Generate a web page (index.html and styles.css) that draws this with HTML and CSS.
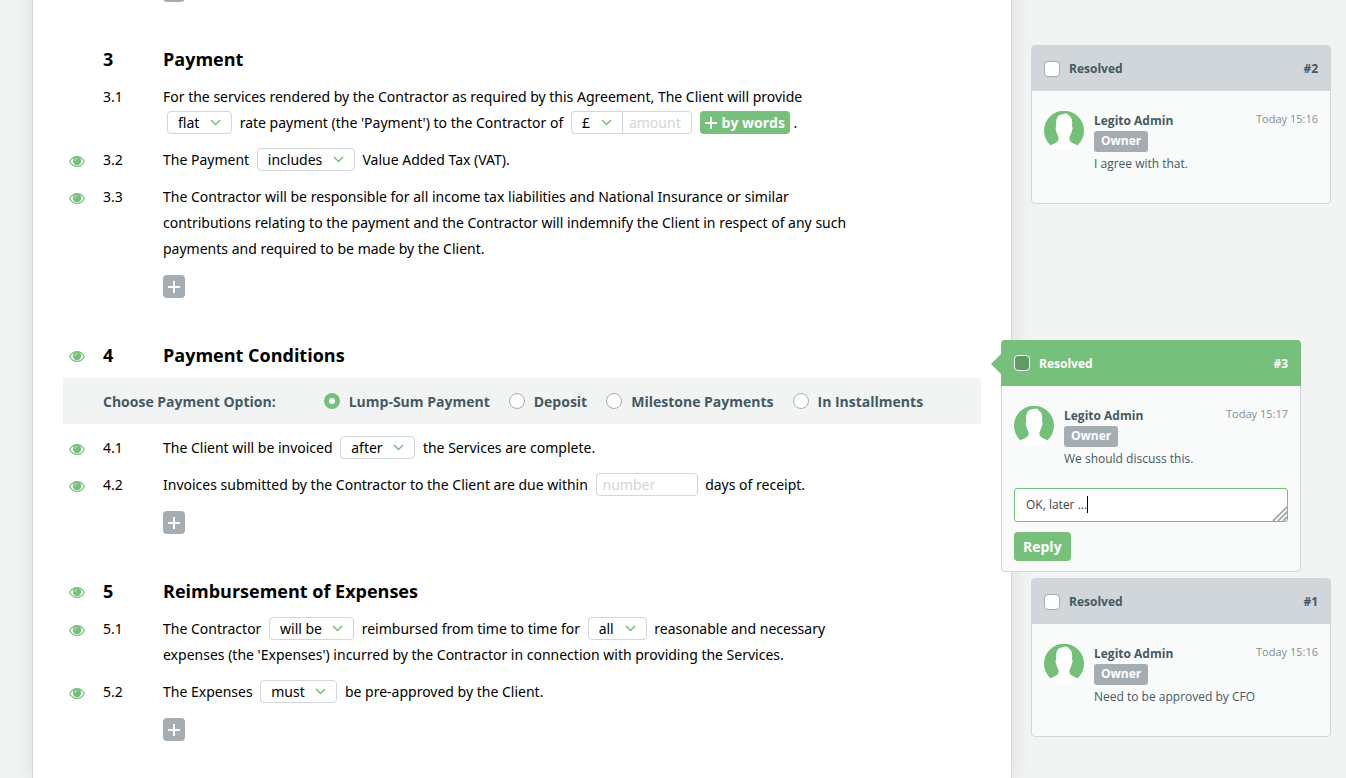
FILE: index.html
```html
<!DOCTYPE html>
<html lang="en">
<head>
    <meta charset="UTF-8">
    <meta name="viewport" content="width=device-width, initial-scale=1.0">
    <title>Service Agreement</title>
    <link rel="stylesheet" href="styles.css">
</head>
<body>
    <!-- shared icons -->
    <svg class="sprite" aria-hidden="true">
        <symbol id="eye" viewBox="0 0 16 11">
            <path d="M0.6 5.500C2.500 2.200 5 0.600 8 0.600S13.500 2.200 15.400 5.500C13.500 8.800 11 10.400 8 10.400S2.500 8.800 0.600 5.500Z" fill="none" stroke="currentColor" stroke-width="1.200"/>
            <circle cx="8" cy="5" r="4.200" fill="currentColor"/>
            <path d="M5.900 4.600C5.900 3.500 6.700 2.800 7.800 2.700" fill="none" stroke="#fff" stroke-width="0.700" stroke-linecap="round"/>
        </symbol>
        <symbol id="plus" viewBox="0 0 12 12">
            <path d="M6 0V12M0 6H12" fill="none" stroke="currentColor" stroke-width="2"/>
        </symbol>
        <symbol id="avatar" viewBox="0 0 40 40">
            <circle cx="20" cy="20" r="20" fill="#fff"/>
            <path d="M6.500 34.500A20 20 0 1 1 33.500 34.500C31 32.500 27 32 25.800 29.500C25 27.500 25.500 25.500 26.500 24C27.300 22.500 27.500 21 28 19.500C28.800 18 28.800 16.500 28 15.500C28.300 11 28.500 7 25.500 5C24.500 4 23.500 2.500 22 2.500C19 3.500 15.500 3 13.500 6C12 8.500 12 12 12.200 15.500C11.300 16.500 11.500 18 12 19.500C12.500 21 12.800 22.500 13.500 24C14.500 25.500 15 27.500 14.200 29.500C13 32 9 32.500 6.500 34.500Z" fill="#74c079"/>
        </symbol>
    </svg>

    <div class="page">
        <main class="paper">
            <div class="add-row">
                <button type="button" class="add" aria-label="Add clause"><svg><use href="#plus"/></svg></button>
            </div>

            <section class="section">
                <div class="row heading">
                    <span></span>
                    <span>3</span>
                    <h2>Payment</h2>
                </div>
                <div class="row">
                    <span></span>
                    <span>3.1</span>
                    <p>For the services rendered by the Contractor as required by this Agreement, The Client will provide
                        <select class="pick" aria-label="Rate"><option>flat</option></select>
                        rate payment (the 'Payment') to the Contractor of
                        <span class="money"><select class="pick" aria-label="Currency"><option>£</option></select><input type="text" class="field" placeholder="amount" aria-label="Amount"></span>
                        <button type="button" class="words"><svg><use href="#plus"/></svg>by words</button> .</p>
                </div>
                <div class="row">
                    <svg class="eye"><use href="#eye"/></svg>
                    <span>3.2</span>
                    <p>The Payment
                        <select class="pick" aria-label="VAT"><option>includes</option></select>
                        Value Added Tax (VAT).</p>
                </div>
                <div class="row">
                    <svg class="eye"><use href="#eye"/></svg>
                    <span>3.3</span>
                    <p>The Contractor will be responsible for all income tax liabilities and National Insurance or similar contributions relating to the payment and the Contractor will indemnify the Client in respect of any such payments and required to be made by the Client.</p>
                </div>
                <div class="add-row">
                    <button type="button" class="add" aria-label="Add clause"><svg><use href="#plus"/></svg></button>
                </div>
            </section>

            <section class="section">
                <div class="row heading">
                    <svg class="eye"><use href="#eye"/></svg>
                    <span>4</span>
                    <h2>Payment Conditions</h2>
                </div>
                <div class="options" role="radiogroup" aria-labelledby="optionTitle">
                    <span class="options-title" id="optionTitle">Choose Payment Option:</span>
                    <label><input type="radio" name="payment" value="lump" checked>Lump-Sum Payment</label>
                    <label><input type="radio" name="payment" value="deposit">Deposit</label>
                    <label><input type="radio" name="payment" value="milestone">Milestone Payments</label>
                    <label><input type="radio" name="payment" value="installments">In Installments</label>
                </div>
                <div class="row">
                    <svg class="eye"><use href="#eye"/></svg>
                    <span>4.1</span>
                    <p>The Client will be invoiced
                        <select class="pick" aria-label="Invoice time"><option>after</option></select>
                        the Services are complete.</p>
                </div>
                <div class="row">
                    <svg class="eye"><use href="#eye"/></svg>
                    <span>4.2</span>
                    <p>Invoices submitted by the Contractor to the Client are due within
                        <input type="text" class="field days" placeholder="number" aria-label="Number of days">
                        days of receipt.</p>
                </div>
                <div class="add-row">
                    <button type="button" class="add" aria-label="Add clause"><svg><use href="#plus"/></svg></button>
                </div>
            </section>

            <section class="section">
                <div class="row heading">
                    <svg class="eye"><use href="#eye"/></svg>
                    <span>5</span>
                    <h2>Reimbursement of Expenses</h2>
                </div>
                <div class="row">
                    <svg class="eye"><use href="#eye"/></svg>
                    <span>5.1</span>
                    <p>The Contractor
                        <select class="pick" aria-label="Reimbursed"><option>will be</option></select>
                        reimbursed from time to time for
                        <select class="pick" aria-label="Scope"><option>all</option></select>
                        reasonable and necessary expenses (the 'Expenses') incurred by the Contractor in connection with providing the Services.</p>
                </div>
                <div class="row">
                    <svg class="eye"><use href="#eye"/></svg>
                    <span>5.2</span>
                    <p>The Expenses
                        <select class="pick" aria-label="Approval"><option>must</option></select>
                        be pre-approved by the Client.</p>
                </div>
                <div class="add-row">
                    <button type="button" class="add" aria-label="Add clause"><svg><use href="#plus"/></svg></button>
                </div>
            </section>
        </main>

        <aside class="comments">
            <article class="comment">
                <header>
                    <label><input type="checkbox">Resolved</label>
                    <span>#2</span>
                </header>
                <div class="comment-body">
                    <svg class="avatar"><use href="#avatar"/></svg>
                    <div class="message">
                        <strong>Legito Admin</strong>
                        <span class="role">Owner</span>
                        <p>I agree with that.</p>
                    </div>
                    <time>Today 15:16</time>
                </div>
            </article>

            <article class="comment active">
                <header>
                    <label><input type="checkbox">Resolved</label>
                    <span>#3</span>
                </header>
                <div class="comment-body">
                    <svg class="avatar"><use href="#avatar"/></svg>
                    <div class="message">
                        <strong>Legito Admin</strong>
                        <span class="role">Owner</span>
                        <p>We should discuss this.</p>
                    </div>
                    <time>Today 15:17</time>
                </div>
                <form class="reply">
                    <div class="reply-box">
                        <textarea aria-label="Reply" rows="1">OK, later ...</textarea>
                        <i class="cursor"></i>
                        <svg class="grip" viewBox="0 0 16 15"><path d="M1 15L16 0M6 15L16 5M11 15L16 10" stroke="#a5a8aa" stroke-width="1.800"/></svg>
                    </div>
                    <button type="button">Reply</button>
                </form>
            </article>

            <article class="comment">
                <header>
                    <label><input type="checkbox">Resolved</label>
                    <span>#1</span>
                </header>
                <div class="comment-body">
                    <svg class="avatar"><use href="#avatar"/></svg>
                    <div class="message">
                        <strong>Legito Admin</strong>
                        <span class="role">Owner</span>
                        <p>Need to be approved by CFO</p>
                    </div>
                    <time>Today 15:16</time>
                </div>
            </article>
        </aside>
    </div>
</body>
</html>
```
FILE: styles.css
```css
* {
    box-sizing: border-box;
}
body {
    margin: 0;
    background-color: #f2f4f3;
    font-family: "Open Sans", "Noto Sans", sans-serif;
    font-size: 14px;
    color: #000;
    overflow: hidden;
}
button, input, select, textarea {
    font-family: inherit;
    font-size: inherit;
    margin: 0;
}
h2, p {
    margin: 0;
}
.sprite {
    display: none;
}
.page {
    display: flex;
    min-height: 100vh;
}

/* Document */
.paper {
    flex: 1;
    margin: -34px 0 0 32px;
    padding: 0 30px;
    background: #fff;
    border: 1px solid #d0d6d9;
    border-width: 0 1px;
    box-shadow: 0 0 20px rgba(0, 0, 0, 0.1);
}
.section {
    margin-top: 44px;
}
.row {
    display: grid;
    grid-template-columns: 40px 60px 1fr;
    margin-top: 11px;
    padding-right: 120px;
    font-family: "Noto Sans", "Open Sans", sans-serif;
    line-height: 26px;
}
.row > span:nth-child(2) {
    grid-column: 2;
}
.heading, .heading h2 {
    font-family: "Open Sans", "Noto Sans", sans-serif;
    font-size: 18px;
    font-weight: bold;
}
.heading + .row {
    margin-top: 12px;
}
.eye {
    width: 16px;
    height: 11px;
    margin: 9px 0 0 6px;
    color: #74c079;
}
.add-row {
    display: flex;
    margin-top: 13px;
    padding-left: 100px;
}
.add {
    display: flex;
    align-items: center;
    justify-content: center;
    width: 22px;
    height: 23px;
    padding: 0;
    border: none;
    border-radius: 4px;
    background: #a5adb3;
    color: #fff;
}
.add svg, .words svg {
    width: 12px;
    height: 12px;
}

/* Fields inside the text */
.pick, .field {
    height: 23px;
    border: 1px solid #d0d6d9;
    border-radius: 4px;
    background: #fff;
    color: #000;
    line-height: 21px;
    vertical-align: baseline;
}
.pick {
    appearance: none;
    margin: 0 4px;
    padding: 0 31px 0 10px;
    background: #fff url("data:image/svg+xml,%3Csvg xmlns='http://www.w3.org/2000/svg' width='11' height='7'%3E%3Cpath d='M1 1L5.500 5.500L10 1' fill='none' stroke='%2374c079' stroke-width='1.500'/%3E%3C/svg%3E") no-repeat right 10px center;
}
.field {
    padding: 0 6px;
}
.field::placeholder {
    color: #d0d6d9;
}
.days {
    width: 102px;
    margin: 0 4px;
}
.money {
    display: inline-flex;
    margin: 0 4px;
    vertical-align: baseline;
}
.money .pick {
    margin: 0;
    border-right: none;
    border-radius: 4px 0 0 4px;
}
.money .field {
    width: 70px;
    border-radius: 0 4px 4px 0;
}
.words {
    height: 23px;
    padding: 0 5px;
    border: none;
    border-radius: 4px;
    background: #77c07b;
    color: #fff;
    font-family: "Open Sans", "Noto Sans", sans-serif;
    font-weight: bold;
    line-height: 23px;
}
.words svg {
    margin-right: 5px;
    vertical-align: -1px;
}

/* Payment options */
.options {
    display: flex;
    align-items: center;
    gap: 19px;
    height: 46px;
    margin-top: 10px;
    padding-left: 40px;
    background: #f2f4f3;
    color: #445963;
    font-weight: bold;
}
.options-title {
    margin-right: 29px;
}
.options label {
    display: flex;
    align-items: center;
    gap: 9px;
}
.options input {
    appearance: none;
    width: 16px;
    height: 16px;
    border: 1px solid #a5adb3;
    border-radius: 50%;
    background: #fff;
}
.options input:checked {
    border: 5px solid #74c079;
}

/* Comments */
.comments {
    width: 334px;
    padding: 45px 15px 0 19px;
    color: #445963;
    font-size: 12px;
}
.comment {
    position: relative;
    min-height: 159px;
    margin-bottom: 6px;
    border: 1px solid #d0d6d9;
    border-radius: 4px;
    background: #f9fbfa;
}
.comment header {
    display: flex;
    align-items: center;
    justify-content: space-between;
    height: 45px;
    padding: 0 12px;
    background: #d0d6d9;
    font-weight: bold;
}
.comment label {
    display: flex;
    align-items: center;
    gap: 9px;
}
.comment header input {
    appearance: none;
    width: 16px;
    height: 16px;
    border: 1px solid #a5adb3;
    border-radius: 4px;
    background: #fff;
}
.comment-body {
    display: flex;
    padding: 20px 12px 0;
}
.avatar {
    width: 40px;
    height: 40px;
    margin-right: 10px;
}
.message {
    flex: 1;
    display: flex;
    flex-direction: column;
    align-items: flex-start;
    line-height: 20px;
}
.message p {
    margin-top: 2px;
}
.role {
    height: 21px;
    padding: 0 7px;
    border-radius: 3px;
    background: #a5adb3;
    color: #fff;
    font-weight: bold;
}
.comment time {
    color: #7f8e96;
    font-size: 11px;
}

/* Comment that is being answered */
.active {
    z-index: 1;
    margin: 136px 30px 6px -30px;
}
.active::before {
    content: "";
    position: absolute;
    top: 13px;
    left: -11px;
    border: 10px solid transparent;
    border-left: none;
    border-right-color: #77c07b;
}
.active header {
    margin: -1px -1px 0;
    height: 46px;
    padding: 0 13px;
    border-radius: 4px 4px 0 0;
    background: #77c07b;
    color: #fff;
}
.active header input {
    border-color: #fff;
    background: #5f9c63;
}
.reply {
    padding: 19px 12px 10px;
}
.reply-box {
    position: relative;
    height: 34px;
    margin-bottom: 10px;
}
.reply textarea {
    display: block;
    width: 100%;
    height: 34px;
    padding: 6px 11px;
    border: 1px solid #74c079;
    border-radius: 3px;
    outline: none;
    background: #fff;
    color: #444;
    line-height: 20px;
    resize: none;
    overflow: hidden;
}
.cursor {
    position: absolute;
    top: 8px;
    left: 73px;
    width: 1px;
    height: 17px;
    background: #000;
}
.grip {
    position: absolute;
    right: 0;
    bottom: 1px;
    width: 16px;
    height: 15px;
}
.reply button {
    height: 29px;
    padding: 0 9px;
    border: none;
    border-radius: 4px;
    background: #77c07b;
    color: #fff;
    font-size: 14px;
    font-weight: bold;
}
```
